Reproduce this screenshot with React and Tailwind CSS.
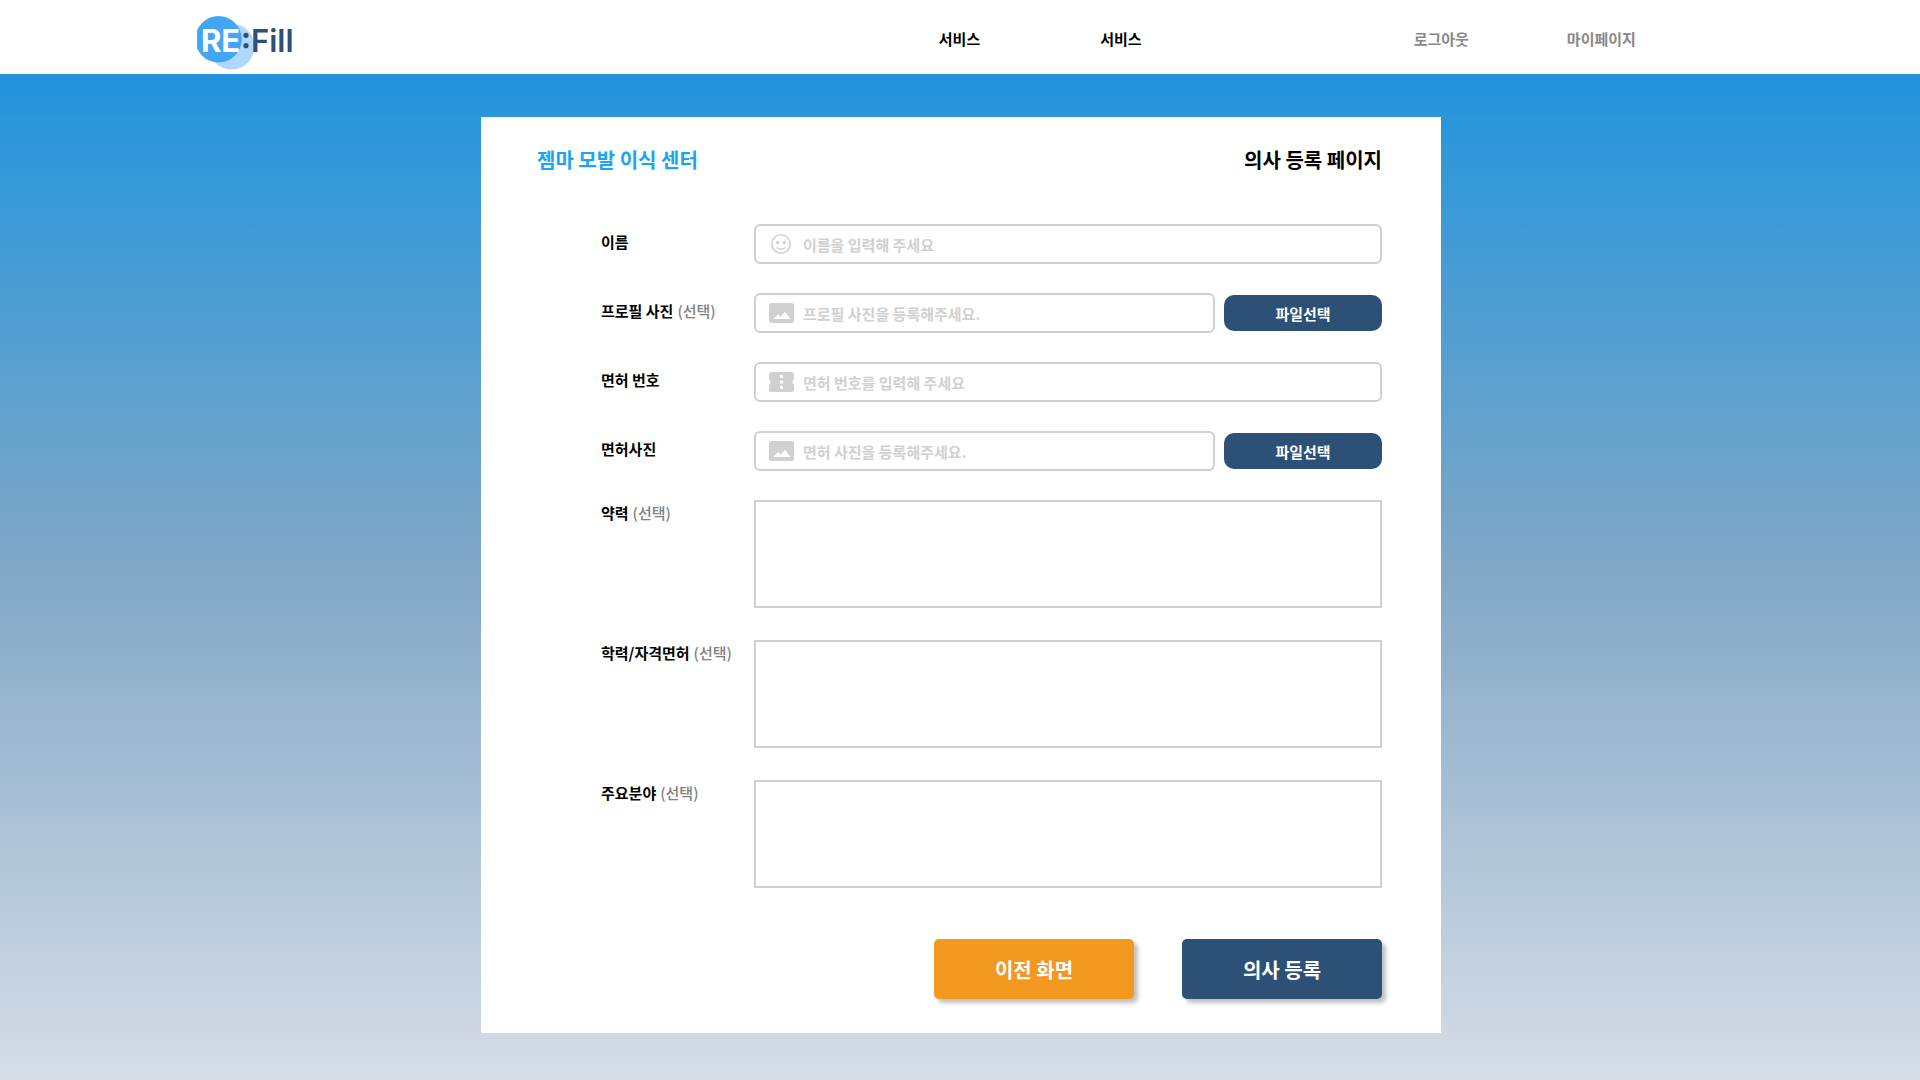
import React from "react";

function Logo() {
  return (
    <svg viewBox="0 0 100 74" className="h-[74px] w-[100px]" role="img" aria-label="RE:Fill">
      <clipPath id="logo-edge">
        <rect x="1" y="0" width="99" height="74" />
      </clipPath>
      <g clipPath="url(#logo-edge)">
        <circle cx="35.500" cy="46.500" r="23" fill="#b0d8fe" />
        <circle cx="22.500" cy="39.300" r="23.200" fill="#42a5f5" />
      </g>
      <text x="5" y="52" fontSize="31" fontWeight="700" fill="#ffffff" className="font-['Inter',sans-serif]">RE</text>
      <circle cx="50" cy="35.300" r="2.6" fill="#2e5077" />
      <circle cx="50" cy="45.700" r="2.6" fill="#2e5077" />
      <text x="55" y="52" fontSize="31" fontWeight="600" fill="#2e5077" className="font-['Inter',sans-serif]">Fill</text>
    </svg>
  );
}

function SmileIcon() {
  return (
    <svg viewBox="0 0 25 20" className="h-5 w-[25px] shrink-0" fill="none" stroke="currentColor" aria-hidden="true">
      <circle cx="12" cy="10" r="9.2" strokeWidth="1.6" />
      <path d="M7.500 13.500Q12 16.500 16.500 13.500" strokeWidth="1.4" />
      <circle cx="8.700" cy="8.500" r="1.7" fill="currentColor" stroke="none" />
      <circle cx="15.300" cy="8.500" r="1.7" fill="currentColor" stroke="none" />
    </svg>
  );
}

function ImageIcon() {
  return (
    <svg viewBox="0 0 25 20" className="h-5 w-[25px] shrink-0" fill="currentColor" aria-hidden="true">
      <path fillRule="evenodd" d="M2.500 0H22.500A2.500 2.500 0 0 1 25 2.500V17.500A2.500 2.500 0 0 1 22.500 20H2.500A2.500 2.500 0 0 1 0 17.500V2.500A2.500 2.500 0 0 1 2.500 0ZM4 16H21.500L16 8.700L11.700 14L9.300 10.800Z" />
    </svg>
  );
}

function TicketIcon() {
  return (
    <svg viewBox="0 0 25 20" className="h-5 w-[25px] shrink-0" fill="currentColor" aria-hidden="true">
      <path fillRule="evenodd" d="M2.500 0H22.500A2.500 2.500 0 0 1 25 2.500V7.500A2.700 2.700 0 0 0 25 12.500V17.500A2.500 2.500 0 0 1 22.500 20H2.500A2.500 2.500 0 0 1 0 17.500V12.500A2.700 2.700 0 0 0 0 7.500V2.500A2.500 2.500 0 0 1 2.500 0ZM11 3V6H14V3ZM11 8.500V11.500H14V8.500ZM11 14V17H14V14Z" />
    </svg>
  );
}

function FieldLabel({ htmlFor, optional, className, children }) {
  return (
    <label htmlFor={htmlFor} className={`w-[153px] shrink-0 font-bold text-black ${className}`}>
      {children}
      {optional && <span className="ml-1 font-medium text-[#808080]">(선택)</span>}
    </label>
  );
}

function TextField({ id, label, optional, placeholder, icon, file }) {
  return (
    <div className="flex items-center">
      <FieldLabel htmlFor={id} optional={optional} className="pb-1">{label}</FieldLabel>
      <div className="flex h-10 min-w-0 flex-1 items-center gap-[9px] rounded-md border-2 border-[#d0d0d0] pl-[13px] text-[#d0d0d0]">
        {icon}
        <input
          id={id}
          type="text"
          readOnly={file}
          placeholder={placeholder}
          className="h-full min-w-0 flex-1 font-bold text-black outline-none placeholder:text-[#d0d0d0]"
        />
      </div>
      {file && (
        <button type="button" className="ml-[9px] flex h-9 w-[158px] items-center justify-center rounded-[10px] bg-[#2d5076] pt-0.5 font-bold text-white">
          파일선택
        </button>
      )}
    </div>
  );
}

function AreaField({ id, label }) {
  return (
    <div className="flex items-start">
      <FieldLabel htmlFor={id} optional className="pt-[3px]">{label}</FieldLabel>
      <textarea id={id} className="block h-[108px] min-w-0 flex-1 resize-none border-2 border-[#d0d0d0] p-2 outline-none" />
    </div>
  );
}

export default function App() {
  return (
    <div className="flex min-h-screen flex-col font-['Noto_Sans_CJK_KR',sans-serif] text-[15px] leading-5">
      <header className="flex h-[74px] items-center bg-white pr-[14.8%] pl-[10.2%]">
        <a href="#" className="mr-auto"><Logo /></a>
        <nav className="flex items-center pt-1 font-bold">
          <a href="#" className="mr-[120px] text-black">서비스</a>
          <a href="#" className="mr-[272px] text-black">서비스</a>
          <a href="#" className="mr-[98px] text-[#888888]">로그아웃</a>
          <a href="#" className="text-[#888888]">마이페이지</a>
        </nav>
      </header>

      <div className="flex-1 bg-linear-to-b/srgb from-[#2194dd] via-[#82a8c6] to-[#d6dde7] pt-[43px] pb-[47px]">
        <main className="mx-auto w-full max-w-[960px] translate-x-px bg-white pt-[27px] pr-[59px] pb-[34px] pl-14">
          <div className="flex items-center justify-between text-xl leading-8 font-bold">
            <h2 className="text-[#1ca3f9]">젬마 모발 이식 센터</h2>
            <h1 className="text-black">의사 등록 페이지</h1>
          </div>
          <form className="mt-12 pl-16">
            <div className="flex flex-col gap-[29px]">
              <TextField id="name" label="이름" placeholder="이름을 입력해 주세요" icon={<SmileIcon />} />
              <TextField id="profile" label="프로필 사진" optional file placeholder="프로필 사진을 등록해주세요." icon={<ImageIcon />} />
              <TextField id="license" label="면허 번호" placeholder="면허 번호를 입력해 주세요" icon={<TicketIcon />} />
              <TextField id="license-photo" label="면허사진" file placeholder="면허 사진을 등록해주세요." icon={<ImageIcon />} />
            </div>
            <div className="mt-[29px] flex flex-col gap-8">
              <AreaField id="career" label="약력" />
              <AreaField id="education" label="학력/자격면허" />
              <AreaField id="specialty" label="주요분야" />
            </div>
            <div className="mt-[51px] flex justify-end gap-12 text-xl font-bold text-white">
              <button type="button" className="h-[60px] w-[200px] rounded-[5px] bg-[#f3981f] pt-0.5 shadow-[4px_4px_4px_rgba(0,0,0,0.25)]">이전 화면</button>
              <button type="submit" className="h-[60px] w-[200px] rounded-[5px] bg-[#2d5076] pt-0.5 shadow-[4px_4px_4px_rgba(0,0,0,0.25)]">의사 등록</button>
            </div>
          </form>
        </main>
      </div>
    </div>
  );
}
